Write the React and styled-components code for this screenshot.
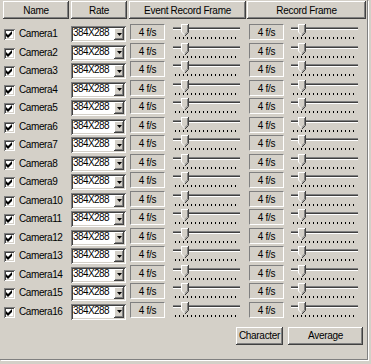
import React from "react";
import styled, { createGlobalStyle } from "styled-components";

const GlobalStyle = createGlobalStyle`
  html, body {
    margin: 0;
    padding: 0;
    background: #d4d0c8;
  }
  body {
    font-family: "Liberation Sans", Arial, sans-serif;
    font-size: 10px;
    color: #000;
  }
`;

const raised = `
  box-shadow: inset -1px -1px #404040, inset 1px 1px #fff,
    inset -2px -2px #808080, inset 2px 2px #d4d0c8;
`;

const sunken = `
  box-shadow: inset 1px 1px #808080, inset -1px -1px #fff,
    inset 2px 2px #404040, inset -2px -2px #d4d0c8;
`;

const Window = styled.div`
  width: 371px;
  height: 364px;
  background: #d4d0c8;
  overflow: hidden;
`;

const Panel = styled.div`
  width: 364px;
  height: 358px;
  padding: 1px 0 0 3px;
  border-right: 1px solid #808080;
  border-bottom: 1px solid #808080;
  box-shadow: 1px 1px 0 #fff;
  display: flex;
  flex-direction: column;
`;

const Header = styled.div`
  display: flex;
  height: 18px;
  margin-bottom: 5.75px;
`;

const HeaderCell = styled.div`
  ${raised}
  width: ${(p) => p.$w}px;
  margin-right: ${(p) => p.$gap || 0}px;
  box-sizing: border-box;
  height: 18px;
  padding-top: 3px;
  line-height: 14px;
  text-align: center;
  letter-spacing: -0.3px;
`;

const Rows = styled.div`
  display: grid;
  grid-auto-rows: 18.53px;
`;

const Row = styled.div`
  display: grid;
  grid-template-columns: 68px 59px 42px 77px 41px 69px;
  align-items: start;
`;

const NameCell = styled.label`
  display: flex;
  align-items: center;
  height: 18.53px;
  padding-left: 1px;
`;

const CheckBox = styled.span`
  ${sunken}
  width: 11px;
  height: 11px;
  margin-top: 1px;
  background: #fff;
  display: flex;
  align-items: center;
  justify-content: center;
`;

const Label = styled.span`
  margin-left: 4px;
  letter-spacing: -0.4px;
  line-height: 18px;
`;

const Select = styled.div`
  ${sunken}
  margin-top: 1.25px;
  width: 55px;
  height: 16px;
  box-sizing: border-box;
  padding: 2px;
  background: #fff;
  display: flex;
`;

const SelectText = styled.span`
  flex: 1;
  line-height: 10px;
  padding-left: 0;
  letter-spacing: -0.6px;
  white-space: nowrap;
  overflow: hidden;
`;

const DropButton = styled.span`
  ${raised}
  flex: none;
  width: 10px;
  height: 12px;
  background: #d4d0c8;
  display: flex;
  align-items: center;
  justify-content: center;
`;

const RateBox = styled.div`
  margin-top: -0.75px;
  width: 35px;
  height: 16px;
  box-sizing: border-box;
  border: 1px solid;
  border-color: #808080 #fff #fff #808080;
  padding-top: 1px;
  line-height: 14px;
  text-align: center;
  letter-spacing: -0.3px;
`;

const SliderBox = styled.div`
  height: 18px;
  margin-top: -0.5px;
  svg {
    display: block;
  }
`;

const Footer = styled.div`
  display: flex;
  justify-content: flex-end;
  gap: 5px;
  padding-right: 4px;
  margin-top: 5.5px;
`;

const Button = styled.button`
  ${raised}
  width: ${(p) => p.$w}px;
  height: 18px;
  border: 0;
  padding: 1px 0 0;
  background: #d4d0c8;
  font-family: "Liberation Sans", Arial, sans-serif;
  font-size: 10px;
  line-height: 16px;
  letter-spacing: -0.3px;
  color: #000;
`;

function Check() {
  return (
    <svg width="7" height="7" viewBox="0 0 7 7">
      <path d="M0 2 L2 4 L6 0 L6 3 L2 7 L0 5 Z" fill="#000" />
    </svg>
  );
}

function Arrow() {
  return (
    <svg width="5" height="3" viewBox="0 0 5 3">
      <path d="M0 0 H5 L2.5 3 Z" fill="#000" />
    </svg>
  );
}

function Slider({ pos }) {
  const ticks = [];
  for (let x = 3; x <= 66; x += 4) {
    ticks.push(<rect key={x} x={x} y={13} width={1} height={2} fill="#000" />);
  }
  return (
    <SliderBox>
      <svg width="69" height="18" shapeRendering="crispEdges">
        <rect x="1" y="3" width="67" height="1" fill="#808080" />
        <rect x="1" y="4" width="67" height="1" fill="#404040" />
        <rect x="1" y="5" width="67" height="1" fill="#fff" />
        {ticks}
        <g transform={`translate(${pos} 0)`}>
          <path d="M0 0 H7 V8 L3.5 11.5 L0 8 Z" fill="#d4d0c8" />
          <path d="M0.5 8 V0.5 H6.5" fill="none" stroke="#fff" />
          <path d="M7.5 0 V8.5 L4 12" fill="none" stroke="#404040" shapeRendering="auto" />
          <path d="M6.5 1 V8 L3.5 11" fill="none" stroke="#808080" shapeRendering="auto" />
          <path d="M0.5 8 L3.5 11" fill="none" stroke="#fff" shapeRendering="auto" />
        </g>
      </svg>
    </SliderBox>
  );
}

const cameras = Array.from({ length: 16 }, (_, i) => `Camera${i + 1}`);

export default function App() {
  return (
    <Window>
      <GlobalStyle />
      <Panel>
        <Header>
          <HeaderCell $w={66} $gap={2}>Name</HeaderCell>
          <HeaderCell $w={56} $gap={2}>Rate</HeaderCell>
          <HeaderCell $w={117} $gap={1}>Event Record Frame</HeaderCell>
          <HeaderCell $w={119}>Record Frame</HeaderCell>
        </Header>
        <Rows>
          {cameras.map((name) => (
            <Row key={name}>
              <NameCell>
                <CheckBox>
                  <Check />
                </CheckBox>
                <Label>{name}</Label>
              </NameCell>
              <Select>
                <SelectText>384X288</SelectText>
                <DropButton>
                  <Arrow />
                </DropButton>
              </Select>
              <RateBox>4 f/s</RateBox>
              <Slider pos={9} />
              <RateBox>4 f/s</RateBox>
              <Slider pos={8} />
            </Row>
          ))}
        </Rows>
        <Footer>
          <Button $w={47}>Character</Button>
          <Button $w={75}>Average</Button>
        </Footer>
      </Panel>
    </Window>
  );
}
